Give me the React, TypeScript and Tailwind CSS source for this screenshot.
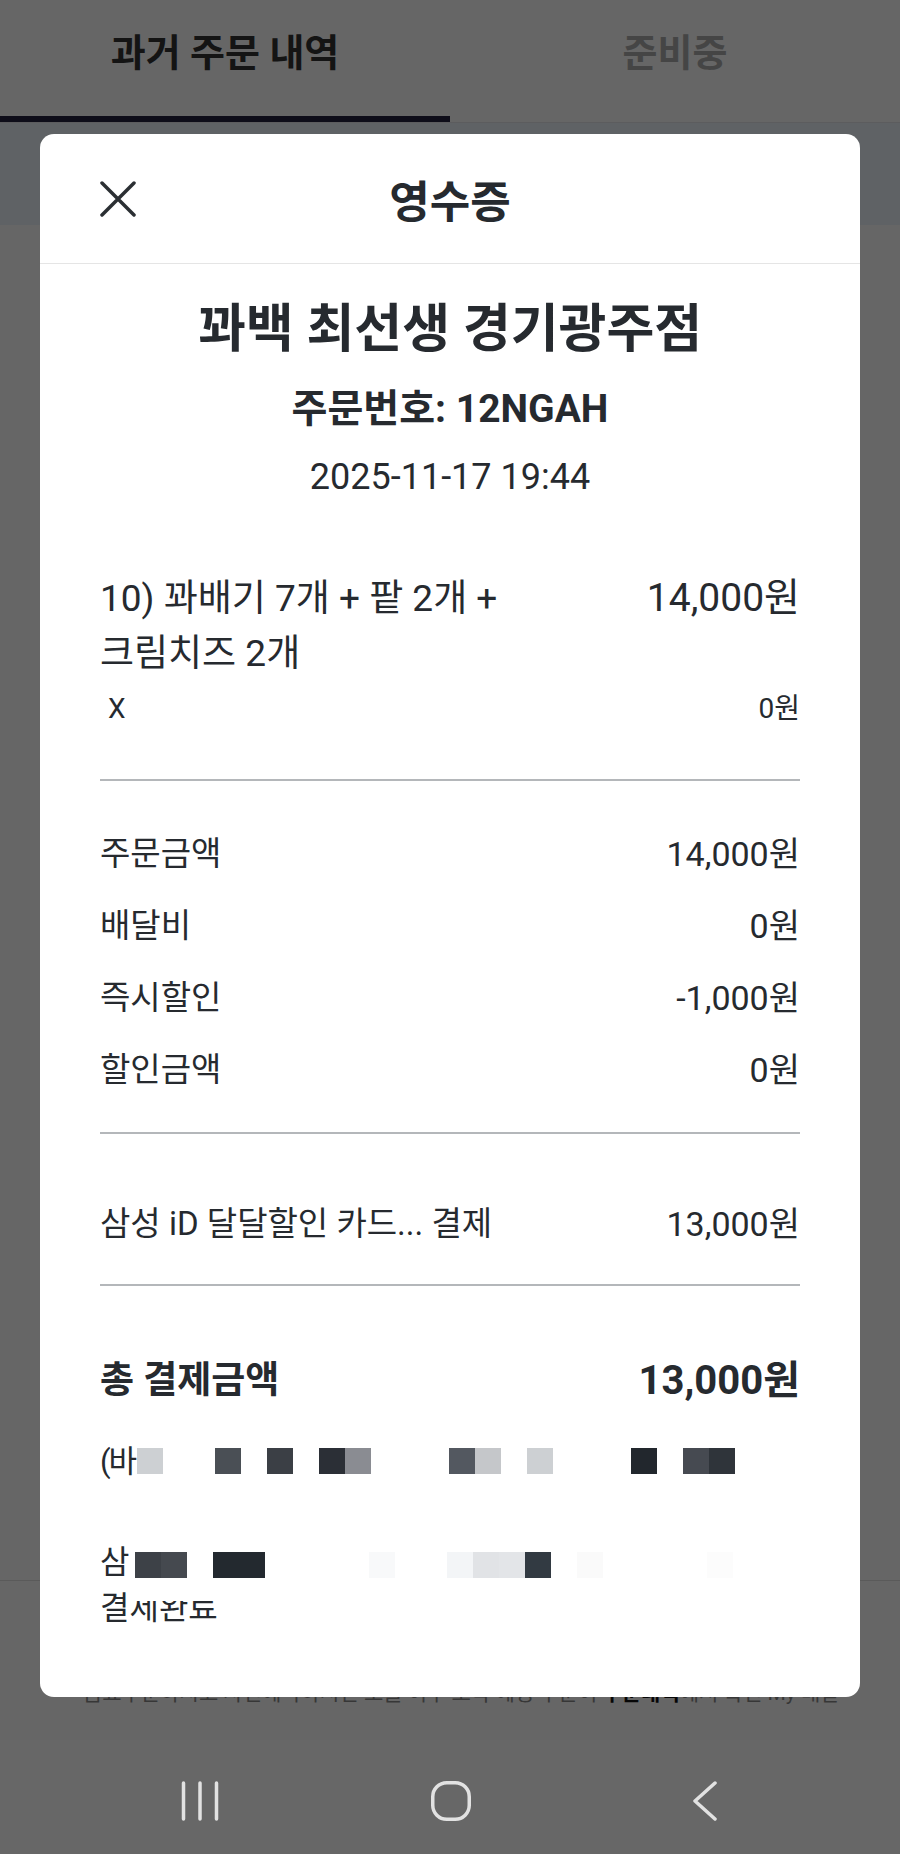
import React from 'react';

type Row = { label: string; amount: string };

const SUMMARY: Row[] = [
  { label: '주문금액', amount: '14,000원' },
  { label: '배달비', amount: '0원' },
  { label: '즉시할인', amount: '-1,000원' },
  { label: '할인금액', amount: '0원' },
];

// pixelated (censored) cells, 26px each, starting right after the first glyph
const MASK_LINE_1: (string | null)[] = [
  'bg-[#cdd0d3]', null, null, 'bg-[#4a4f55]', null, 'bg-[#3b3f45]', null, 'bg-[#2b2f36]', 'bg-[#8a8c92]',
  null, null, null, 'bg-[#535860]', 'bg-[#c5c7ca]', null, 'bg-[#cdd0d3]', null, null, null,
  'bg-[#22272d]', null, 'bg-[#464a51]', 'bg-[#2f343a]',
];

const MASK_LINE_2: (string | null)[] = [
  'bg-[#3d4147]', 'bg-[#45494f]', null, 'bg-[#23292f]', 'bg-[#23292f]', null, null, null, null,
  'bg-[#f8f9fa]', null, null, 'bg-[#f3f5f7]', 'bg-[#e1e3e6]', 'bg-[#e3e5e8]', 'bg-[#323a42]', null,
  'bg-[#fafafa]', null, null, null, null, 'bg-[#fcfcfc]',
];

function Mask({ cells, className }: { cells: (string | null)[]; className: string }) {
  return (
    <div className={`absolute flex ${className}`}>
      {cells.map((c, i) => (
        <span key={i} className={`h-[26px] w-[26px] ${c ?? ''}`} />
      ))}
    </div>
  );
}

function Divider() {
  return <div className="h-[2px] bg-[#b4b7ba]" />;
}

function CloseIcon() {
  return (
    <svg width="36" height="36" viewBox="0 0 36 36" fill="none" stroke="#2b2f33" strokeWidth="3.5" strokeLinecap="round">
      <path d="M2 2L34 34M34 2L2 34" />
    </svg>
  );
}

function Receipt() {
  return (
    <div className="absolute left-[40px] top-[134px] h-[1563px] w-[820px] overflow-hidden rounded-[14px] bg-white text-[#262a2f]">
      <div className="grid h-[130px] grid-cols-[1fr_auto_1fr] items-center border-b border-[#e5e5e5] px-[60px]">
        <button type="button" className="justify-self-start">
          <CloseIcon />
        </button>
        <h2 className="mt-[8px] text-[44px] font-bold leading-[52px]">영수증</h2>
        <span />
      </div>

      <div className="flex flex-col px-[60px]">
        <h1 className="mt-[36px] text-center text-[52px] font-bold leading-[60px]">꽈백 최선생 경기광주점</h1>
        <p className="mt-[27px] text-center text-[39px] font-bold leading-[44px]">주문번호: 12NGAH</p>
        <p className="mt-[24px] text-center text-[36px] leading-[44px]">2025-11-17 19:44</p>

        <div className="mt-[72px] flex items-start justify-between gap-4">
          <p className="max-w-[440px] break-keep text-[37px] leading-[55px]">10) 꽈배기 7개 + 팥 2개 + 크림치즈 2개</p>
          <span className="shrink-0 text-[39px] leading-[55px]">14,000원</span>
        </div>
        <div className="mt-[8px] flex justify-between text-[28px] leading-[40px]">
          <span className="pl-[8px]">X</span>
          <span>0원</span>
        </div>

        <div className="mt-[50px]">
          <Divider />
        </div>

        <div className="mt-[51px] flex flex-col gap-[28px]">
          {SUMMARY.map((r) => (
            <div key={r.label} className="flex items-center justify-between leading-[44px]">
              <span className="text-[33px]">{r.label}</span>
              <span className="text-[34px]">{r.amount}</span>
            </div>
          ))}
        </div>

        <div className="mt-[40px]">
          <Divider />
        </div>

        <div className="mt-[68px] flex items-center justify-between leading-[44px]">
          <span className="text-[33px]">삼성 iD 달달할인 카드... 결제</span>
          <span className="text-[34px]">13,000원</span>
        </div>

        <div className="mt-[38px]">
          <Divider />
        </div>

        <div className="mt-[70px] flex items-center justify-between font-bold leading-[50px]">
          <span className="text-[37px]">총 결제금액</span>
          <span className="text-[40px]">13,000원</span>
        </div>

        <div className="relative mt-[34px] h-[44px] text-[31px] leading-[44px] tracking-[-2px]">
          (바
          <Mask cells={MASK_LINE_1} className="left-[37px] top-[8px]" />
        </div>

        <div className="relative mt-[55px] text-[32px] leading-[46px]">
          <div>삼</div>
          <Mask cells={MASK_LINE_2} className="left-[35px] top-[13px]" />
          <div>
            결
            <span className="relative inline-block">
              제완료
              <span className="absolute inset-x-0 top-0 h-[16px] bg-white" />
            </span>
          </div>
        </div>
      </div>
    </div>
  );
}

function NavBar() {
  return (
    <div className="flex h-[114px] items-center bg-[#676767] pt-[8px]">
      <div className="ml-[160px] flex w-[80px] justify-center">
        <svg width="40" height="40" viewBox="0 0 40 40" fill="none" stroke="#e2e2e2" strokeWidth="3.5" strokeLinecap="round">
          <path d="M3.5 2V38M20 2V38M36.5 2V38" />
        </svg>
      </div>
      <div className="ml-[171px] flex w-[80px] justify-center">
        <svg width="40" height="40" viewBox="0 0 40 40" fill="none" stroke="#e2e2e2" strokeWidth="3.5">
          <rect x="1.75" y="1.75" width="36.5" height="36.5" rx="14" />
        </svg>
      </div>
      <div className="ml-[174px] flex w-[80px] justify-center">
        <svg width="26" height="40" viewBox="0 0 26 40" fill="none" stroke="#e2e2e2" strokeWidth="3.5" strokeLinecap="round" strokeLinejoin="round">
          <path d="M23 2L3 20L23 38" />
        </svg>
      </div>
    </div>
  );
}

export default function App() {
  return (
    <div className="flex h-[1854px] w-[900px] flex-col overflow-hidden font-['Roboto','Noto_Sans_CJK_KR',sans-serif]">
      <div className="relative flex-1 overflow-hidden bg-white">
        {/* page underneath the dialog */}
        <div className="flex h-[123px] border-b border-[#e5e7eb]">
          <div className="h-[122px] flex-1 border-b-[6px] border-[#25223f] pt-[29px] text-center text-[38px] font-bold leading-[48px] text-[#333]">
            과거 주문 내역
          </div>
          <div className="h-[122px] flex-1 pt-[29px] text-center text-[38px] font-bold leading-[48px] text-[#acacac]">
            준비중
          </div>
        </div>
        <div className="h-[102px] bg-[#eef6fd]" />
        <div className="h-[1355px]" />
        <div className="border-t border-[#e2e2e2] pl-[83px] pt-[94px]">
          <p className="whitespace-nowrap text-[21px] leading-[36px] text-[#8a8a8a]">
            음료주문하시고 사전예약하시면 오늘 이후 도착 예정 주문이 <span className="font-bold text-[#111]">주문내역</span>에서 확인 My 배달
          </p>
        </div>

        <div className="absolute inset-0 bg-black/60" />
        <Receipt />
      </div>
      <NavBar />
    </div>
  );
}
